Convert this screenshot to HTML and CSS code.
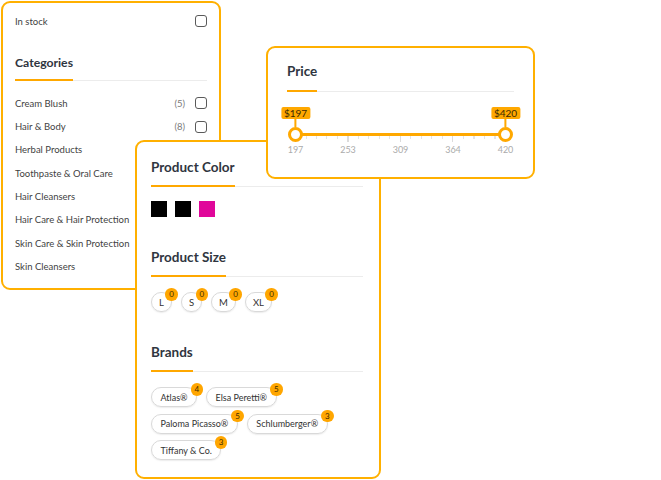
FILE: index.html
```html
<!DOCTYPE html>
<html lang="en">
<head>
<meta charset="utf-8">
<title>Filters</title>
<link rel="stylesheet" href="styles.css">
</head>
<body>
<div class="canvas">

  <section class="card card-filters">
    <div class="row stock-row">
      <span class="label">In stock</span>
      <span class="check"></span>
    </div>
    <div class="head head-cat"><h3>Categories</h3></div>
    <ul class="cat-list">
      <li><span class="label">Cream Blush</span><span class="count">(5)</span><span class="check"></span></li>
      <li><span class="label">Hair &amp; Body</span><span class="count">(8)</span><span class="check"></span></li>
      <li><span class="label">Herbal Products</span><span class="check"></span></li>
      <li><span class="label">Toothpaste &amp; Oral Care</span><span class="check"></span></li>
      <li><span class="label">Hair Cleansers</span><span class="check"></span></li>
      <li><span class="label">Hair Care &amp; Hair Protection</span><span class="check"></span></li>
      <li><span class="label">Skin Care &amp; Skin Protection</span><span class="check"></span></li>
      <li><span class="label">Skin Cleansers</span><span class="check"></span></li>
    </ul>
  </section>

  <section class="card card-attrs">
    <div class="head"><h3>Product Color</h3></div>
    <div class="swatches">
      <span class="swatch sw-black"></span>
      <span class="swatch sw-black"></span>
      <span class="swatch sw-pink"></span>
    </div>

    <div class="head head-gap"><h3>Product Size</h3></div>
    <div class="pills sizes">
      <span class="pill">L<b class="badge">0</b></span>
      <span class="pill">S<b class="badge">0</b></span>
      <span class="pill">M<b class="badge">0</b></span>
      <span class="pill">XL<b class="badge">0</b></span>
    </div>

    <div class="head head-gap"><h3>Brands</h3></div>
    <div class="pills brands">
      <span class="pill">Atlas®<b class="badge">4</b></span>
      <span class="pill">Elsa Peretti®<b class="badge">5</b></span>
      <span class="pill">Paloma Picasso®<b class="badge">5</b></span>
      <span class="pill">Schlumberger®<b class="badge">3</b></span>
      <span class="pill">Tiffany &amp; Co.<b class="badge">3</b></span>
    </div>
  </section>

  <section class="card card-price">
    <div class="head"><h3>Price</h3></div>
    <div class="slider">
      <div class="track"></div>
      <div class="ticks"></div>
      <div class="thumb thumb-min"><span class="tip">$197</span></div>
      <div class="thumb thumb-max"><span class="tip">$420</span></div>
      <div class="scale">
        <span>197</span><span>253</span><span>309</span><span>364</span><span>420</span>
      </div>
    </div>
  </section>

</div>
</body>
</html>
```

FILE: styles.css
```css
* { box-sizing: border-box; }

html, body {
  margin: 0;
  padding: 0;
  background: #ffffff;
}

body {
  font-family: Lato, "Open Sans", "Liberation Sans", sans-serif;
  color: #3d3d3d;
}

.canvas {
  position: relative;
  width: 661px;
  height: 480px;
  overflow: hidden;
}

.card {
  position: absolute;
  background: #ffffff;
  border: 2px solid #ffb000;
  border-radius: 9px;
}

/* ---------- left filter card ---------- */
.card-filters {
  left: 1px;
  top: 1px;
  width: 220px;
  height: 289px;
  padding: 8px 12px 0 12px;
}

.row, .cat-list li {
  display: flex;
  align-items: center;
}

.stock-row {
  height: 20px;
}

.label {
  flex: 1;
  font-size: 9.5px;
  color: #3f3f3f;
  white-space: nowrap;
}

.count {
  font-size: 9.5px;
  color: #7a7a7a;
  margin-right: 10px;
}

.check {
  width: 12px;
  height: 12px;
  border: 1.6px solid #5a5a5a;
  border-radius: 3px;
  flex: none;
}

.head {
  display: flex;
  border-bottom: 1px solid #ececec;
}

.head h3 {
  margin: 0 0 -1px 0;
  font-size: 13.5px;
  line-height: 16px;
  font-weight: 700;
  color: #2f3540;
  padding-bottom: 10px;
  border-bottom: 2px solid #ffa800;
}

.head-cat {
  margin-top: 24px;
}

.head-cat h3 {
  font-size: 12.2px;
  padding-bottom: 8px;
}

.cat-list {
  list-style: none;
  margin: 10.5px 0 0 0;
  padding: 0;
}

.cat-list li {
  height: 23.35px;
}

/* ---------- attributes card ---------- */
.card-attrs {
  left: 135px;
  top: 140px;
  width: 246px;
  height: 339px;
  padding: 17px 16px 0 14px;
}

.head-gap {
  margin-top: 32px;
}

.swatches {
  display: flex;
  gap: 8px;
  margin-top: 14px;
}

.swatch {
  width: 16px;
  height: 16px;
}

.sw-black { background: #000000; }
.sw-pink { background: #e0079a; }

.pills {
  display: flex;
  flex-wrap: wrap;
  gap: 6.5px 9px;
  margin-top: 15px;
}

.pill {
  position: relative;
  height: 20px;
  padding: 0 7.5px;
  display: inline-flex;
  align-items: center;
  font-size: 9.5px;
  color: #333333;
  border: 1px solid #d9d9d9;
  border-radius: 10px;
  box-shadow: 0 1px 1.5px rgba(0, 0, 0, 0.08);
  white-space: nowrap;
}

.sizes .pill {
  padding: 0 7px;
}

.brands .pill {
  font-size: 9px;
  padding: 0 8.5px;
}

.badge {
  position: absolute;
  top: -5px;
  right: -7px;
  width: 12.5px;
  height: 12.5px;
  border-radius: 50%;
  background: #ffa600;
  color: #3d2a00;
  font-size: 8px;
  font-weight: 400;
  line-height: 12.5px;
  text-align: center;
}

/* ---------- price card ---------- */
.card-price {
  left: 266px;
  top: 46px;
  width: 269px;
  height: 133px;
  padding: 15px 19px 0 19px;
}

.card-price .head h3 {
  padding-bottom: 11px;
}

.slider {
  position: relative;
  height: 64px;
}

.track {
  position: absolute;
  left: 8.5px;
  right: 8.5px;
  top: 40.5px;
  height: 3px;
  background: #ffa800;
  border-radius: 2px;
}

.ticks {
  position: absolute;
  left: 8px;
  width: 211px;
  top: 44px;
  height: 6px;
  background:
    repeating-linear-gradient(to right, #dcdcdc 0 1px, transparent 1px 52.5px) 0 0 / 100% 6px no-repeat,
    repeating-linear-gradient(to right, #e4e4e4 0 1px, transparent 1px 10.5px) 0 0 / 100% 3px no-repeat;
}

.thumb {
  position: absolute;
  top: 34.5px;
  width: 15px;
  height: 15px;
  border: 3px solid #ffa800;
  border-radius: 50%;
  background: #ffffff;
}

.thumb-min { left: 1px; }
.thumb-max { right: 1px; }

.tip {
  position: absolute;
  left: 50%;
  bottom: 20px;
  transform: translateX(-50%);
  height: 12px;
  padding: 0 3px;
  background: #ffa800;
  color: #3b2a00;
  font-size: 10px;
  line-height: 12px;
  border-radius: 2px;
  white-space: nowrap;
}

.tip::after {
  content: "";
  position: absolute;
  left: 50%;
  top: 12px;
  width: 2px;
  height: 8px;
  margin-left: -1px;
  background: #ffa800;
}

.scale {
  position: absolute;
  left: 8.5px;
  right: 8.5px;
  top: 52px;
  display: flex;
  justify-content: space-between;
}

.scale span {
  width: 0;
  display: flex;
  justify-content: center;
  font-size: 9px;
  line-height: 12px;
  color: #ababab;
  white-space: nowrap;
}
```
